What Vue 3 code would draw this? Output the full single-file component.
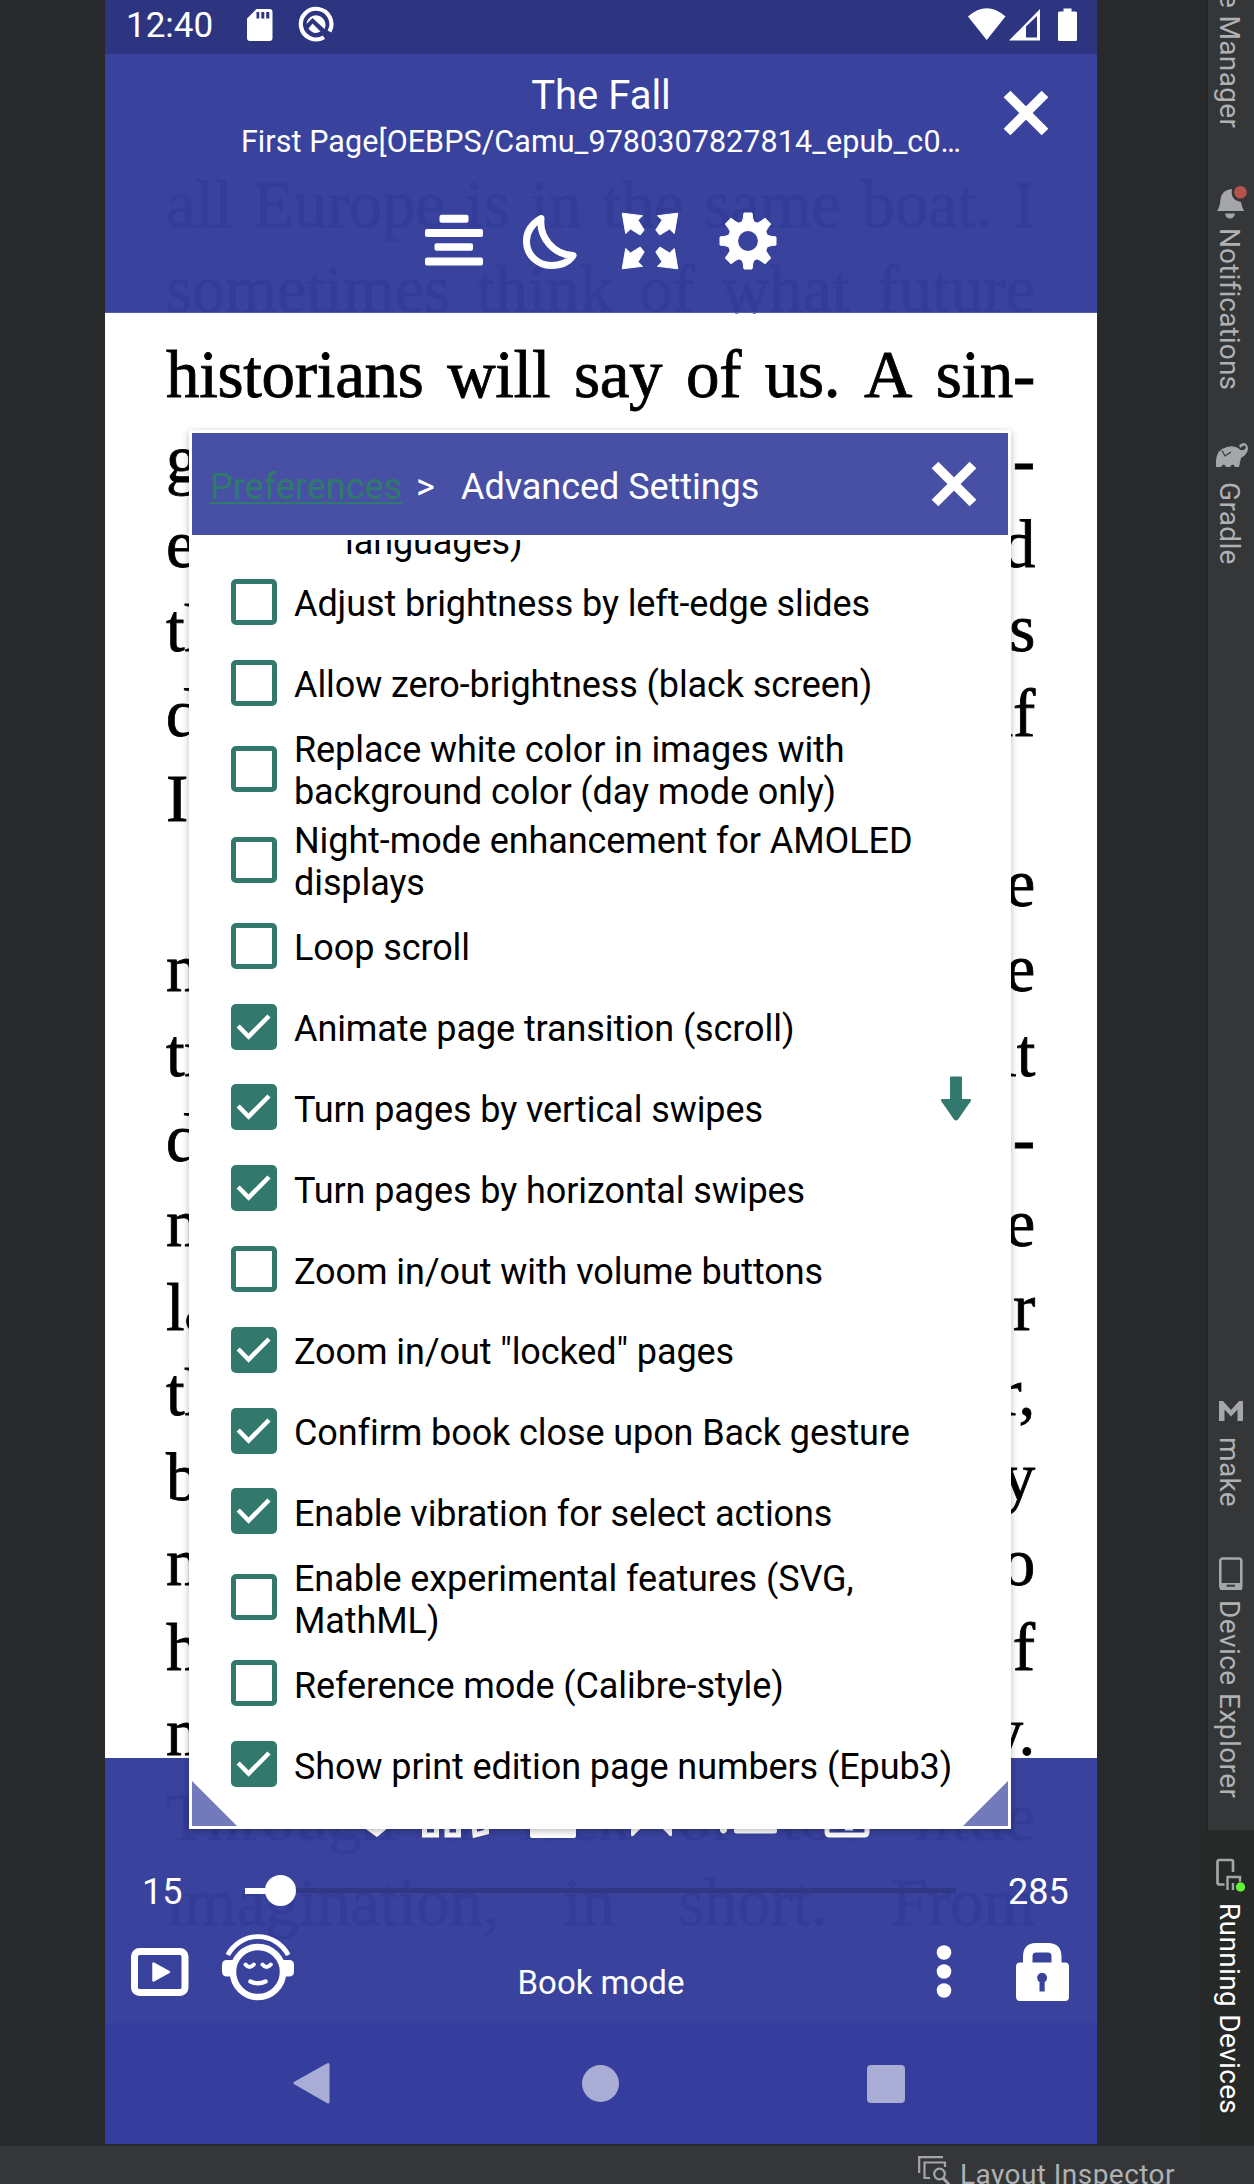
<script setup>
const lines = [
  ['all', 'Europe', 'is', 'in', 'the', 'same', 'boat.', 'I'],
  ['sometimes', 'think', 'of', 'what', 'future'],
  ['historians', 'will', 'say', 'of', 'us.', 'A', 'sin-'],
  ['g', 'l-'],
  ['e', 'd'],
  ['th', 's'],
  ['d', 'if'],
  ['I'],
  ['', 'e'],
  ['n', 'e'],
  ['tr', 'it'],
  ['d', 'e-'],
  ['n', 'e'],
  ['la', 'r'],
  ['th', 'r,'],
  ['b', 'y'],
  ['n', 'o'],
  ['h', 'of'],
  ['n', 'y.'],
  ['Through', 'a', 'lack', 'or', 'too', 'little'],
  ['imagination,', 'in', 'short.', 'From'],
]
const loose = ['l-', 'e-', 'of']
const options = [
  { t: 'Adjust brightness by left-edge slides', on: false },
  { t: 'Allow zero-brightness (black screen)', on: false },
  { t: 'Replace white color in images with\nbackground color (day mode only)', on: false },
  { t: 'Night-mode enhancement for AMOLED\ndisplays', on: false },
  { t: 'Loop scroll', on: false },
  { t: 'Animate page transition (scroll)', on: true },
  { t: 'Turn pages by vertical swipes', on: true },
  { t: 'Turn pages by horizontal swipes', on: true },
  { t: 'Zoom in/out with volume buttons', on: false },
  { t: 'Zoom in/out "locked" pages', on: true },
  { t: 'Confirm book close upon Back gesture', on: true },
  { t: 'Enable vibration for select actions', on: true },
  { t: 'Enable experimental features (SVG,\nMathML)', on: false },
  { t: 'Reference mode (Calibre-style)', on: false },
  { t: 'Show print edition page numbers (Epub3)', on: true },
]
const teeth = [0, 45, 90, 135, 180, 225, 270, 315]
const corners = ['1,1', '-1,1', '1,-1', '-1,-1']
</script>

<template>
  <div class="ide">
    <div class="workspace">
      <div class="phone">
        <div class="page">
          <div v-for="(l, i) in lines" :key="i" class="line"><span v-for="(w, j) in l" :key="j" :class="{ loose: l.length === 2 && loose.includes(w) }">{{ w }}</span></div>
        </div>

        <header class="top">
          <div class="status">
            <span class="clock">12:40</span>
            <svg class="sd" width="26" height="33" viewBox="0 0 26 33"><path fill="#fff" fill-rule="evenodd" d="M9.500 0H22.500Q25.500 0 25.500 3V29Q25.500 32 22.500 32H3Q0 32 0 29V9.500ZM9.500 3V9.500H12.300V3ZM14.300 3V9.500H17.300V3ZM19.200 3V9.500H22.300V3Z"/></svg>
            <svg class="q" width="36" height="36" viewBox="0 0 36 36"><path d="M26 31.200A15.300 15.300 0 1 1 31.500 25.500" fill="none" stroke="#fff" stroke-width="4.200"/><path fill="#fff" d="M8.500 18A9.500 9.500 0 1 1 26.500 23L14.500 12ZM14.500 17.500L22.500 25.500Q15.500 29.500 10.500 22.500Z"/></svg>
            <span class="grow"></span>
            <svg width="111" height="34" viewBox="0 0 111 34"><path fill="#fff" d="M0 8.500Q18.700 -8 37.500 8.500L18.700 32ZM41 32.500L72 1V32.500ZM90 5Q90 3.500 91.500 3.500H95.500V.5H103.500V3.500H107.500Q109 3.500 109 5V31.500Q109 33 107.500 33H91.500Q90 33 90 31.500Z"/><path fill="#2d3581" d="M58 18.500L69 8V29.500H58Z"/></svg>
          </div>
          <div class="titles">
            <div class="names"><h1>The Fall</h1><p>First Page[OEBPS/Camu_9780307827814_epub_c0…</p></div>
            <svg class="close" width="46" height="46" viewBox="0 0 46 46"><path d="M4 4L42 42M42 4L4 42" stroke="#fff" stroke-width="9.500"/></svg>
          </div>
          <div class="tools">
            <svg width="58" height="58" viewBox="-29 -29 58 58"><g fill="#fff"><rect x="-14.500" y="-26.300" width="29" height="8" rx="2"/><rect x="-29" y="-12" width="58" height="8" rx="2"/><rect x="-19.500" y="2.300" width="38.500" height="7.500" rx="2"/><rect x="-29" y="16.500" width="58" height="8" rx="2"/></g></svg>
            <svg width="58" height="58" viewBox="-29 -29 58 58"><path d="M-11 -22.500C-20 -17 -26 -9 -25.500 1A25 24 0 0 0 -1 24.500C9 24.500 17 20.500 21 14.500C2 13.500 -13 -3 -11 -22.500Z" fill="none" stroke="#fff" stroke-width="7" stroke-linejoin="round"/></svg>
            <svg width="58" height="58" viewBox="-29 -29 58 58"><path v-for="c in corners" :key="c" :transform="`scale(${c})`" fill="#fff" stroke="#fff" stroke-linejoin="round" d="M-27.800 -27.800L-7.500 -25.300L-12 -20.800L-5.800 -11L-9.800 -6L-19.500 -12L-24.300 -7.500Z"/></svg>
            <svg width="58" height="58" viewBox="-29 -29 58 58"><circle r="15.200" fill="none" stroke="#fff" stroke-width="10.600"/><path v-for="a in teeth" :key="a" :transform="`rotate(${a})`" fill="#fff" stroke="#fff" stroke-linejoin="round" d="M-6.300 -18Q-4.500 -22 -4 -28H4Q4.500 -22 6.300 -18Z"/></svg>
          </div>
        </header>

        <footer class="bottom">
          <svg class="tips" width="992" height="80" viewBox="105 1758 992 80"><g fill="#fff"><path d="M350 1818H400L377 1837ZM530 1818H576V1836Q576 1838 574 1838H532Q530 1838 530 1836ZM631 1818H672V1835Q671 1838 668 1834L651.500 1818L635 1834Q632 1838 631 1835ZM720 1818H727V1831Q723 1836 720 1831ZM734 1818H777V1831Q777 1833.500 774 1833.500H737Q734 1833.500 734 1831Z"/></g><g fill="none" stroke="#fff" stroke-width="5"><path d="M424.500 1818V1835H436.500V1818M447 1818V1835H458.500V1818M473 1818L475 1835L486.500 1832V1818M827 1818V1832Q827 1835 830 1835H864Q867 1835 867 1832V1818"/><path d="M845 1829H853" stroke-width="3"/></g></svg>
          <div class="seek">
            <span class="from">15</span>
            <div class="track"><i></i><b></b></div>
            <span class="to">285</span>
          </div>
          <div class="actions">
            <svg class="play" width="58" height="48" viewBox="0 0 58 48"><rect x="3.500" y="3.500" width="50.500" height="41" rx="5" fill="none" stroke="#fff" stroke-width="7"/><path d="M22.500 15.500L38 24L22.500 32.500Z" fill="#fff" stroke="#fff" stroke-width="2.500" stroke-linejoin="round"/></svg>
            <svg class="face" width="72" height="68" viewBox="0 0 72 68"><g fill="none" stroke="#fff"><circle cx="36" cy="39" r="25" stroke-width="6.500"/><path d="M5.800 22A34 34 0 0 1 66.200 22" stroke-width="4.800"/><path d="M23.500 31.500Q27.500 36.500 31.800 31.500M40.500 31.500Q44.500 36.500 48.800 31.500" stroke-width="4" stroke-linecap="round"/><path d="M28.500 48.500Q36 52 43.500 48.500" stroke-width="4.500" stroke-linecap="round"/></g><path fill="#fff" d="M5 27H14L8 43.500H5Q0 43.500 0 38.500V32Q0 27 5 27ZM67 27H58L64 43.500H67Q72 43.500 72 38.500V32Q72 27 67 27Z"/></svg>
            <span class="mode">Book mode</span>
            <svg class="dots" width="16" height="54" viewBox="0 0 16 54"><g fill="#fff"><circle cx="8" cy="7.500" r="7.300"/><circle cx="8" cy="26.500" r="7.300"/><circle cx="8" cy="45.500" r="7.300"/></g></svg>
            <svg class="lock" width="53" height="58" viewBox="0 0 53 58"><path fill="#fff" fill-rule="evenodd" d="M7 19.500V14Q7 0 20 0H32Q45.500 0 45.500 14V19.500H49Q53 19.500 53 23.500V54Q53 58 49 58H4Q0 58 0 54V23.500Q0 19.500 4 19.500ZM16.500 19.500H35.500V13Q35.500 9.500 32 9.500H20Q16.500 9.500 16.500 13ZM23.500 39V48.500H28.700V39A5 5 0 1 0 23.500 39Z"/></svg>
          </div>
          <nav class="nav">
            <svg width="38" height="43" viewBox="0 0 38 43"><path d="M2 21L35 2.500V40Z" fill="#a9add6" stroke="#a9add6" stroke-width="3" stroke-linejoin="round"/></svg>
            <i class="home"></i>
            <i class="recent"></i>
          </nav>
        </footer>

        <section class="dialog">
          <div class="head">
            <a class="crumb">Preferences</a><span class="sep">&gt;</span><span class="cur">Advanced Settings</span>
            <svg class="x" width="46" height="46" viewBox="0 0 46 46"><path d="M4 4L42 42M42 4L4 42" stroke="#fff" stroke-width="9.500"/></svg>
          </div>
          <div class="list">
            <div class="cut">languages)</div>
            <div v-for="o in options" :key="o.t" class="opt" :class="{ two: o.t.includes('\n') }">
              <span class="box" :class="{ on: o.on }"><svg v-if="o.on" width="46" height="46" viewBox="0 0 46 46"><path d="M7.200 22L17.600 32.500L38 12" fill="none" stroke="#fff" stroke-width="4.500"/></svg></span>
              <span class="lbl">{{ o.t }}</span>
            </div>
          </div>
          <svg class="down" width="32" height="46" viewBox="0 0 32 46"><path fill="#33786d" d="M10 1.500Q10 .5 11 .5H21Q22 .5 22 1.500V23H29.500Q32 23 30.500 25.500L18 43.500Q16 45.500 14 43.500L1.500 25.500Q0 23 2.500 23H10Z"/></svg>
          <i class="grip l"></i><i class="grip r"></i>
        </section>
      </div>

      <aside class="side">
        <div class="tab t0"><span>e Manager</span></div>
        <div class="tab t1">
          <svg width="32" height="34" viewBox="0 0 32 34"><path fill="#a4a6a8" d="M1 25Q4 21 4.500 13Q5.500 4 16 3Q14 14 25 16Q26 22 28 25ZM9 27.500H19Q18 32.500 14 32.500T9 27.500Z"/><circle cx="24.500" cy="6.300" r="6.300" fill="#b5524d"/></svg>
          <span>Notifications</span>
        </div>
        <div class="tab t2">
          <svg width="34" height="25" viewBox="0 0 34 25"><path fill="#a4a6a8" d="M1 24Q0 10 7 6Q16 1 23 5Q27 9 30 6Q32 3 29 2.500Q26.500 3 25.500 5L24 2.500Q26 0 29 0Q33 1 33 6Q32 12 26 15Q25 19 24 24H20Q18 19 15 24H11Q9 19 6 24Z"/><path d="M7 7.500L10 13L16 9" fill="none" stroke="#353638" stroke-width="1.200"/></svg>
          <span>Gradle</span>
        </div>
        <div class="tab t3">
          <svg width="24" height="20" viewBox="0 0 24 20"><path fill="#a4a6a8" d="M0 20V0H4L12 9L20 0H24V20H18.500V8.500L12 15.500L5.500 8.500V20Z"/></svg>
          <span>make</span>
        </div>
        <div class="tab t4">
          <svg width="24" height="33" viewBox="0 0 24 33"><rect x="1.300" y="1.500" width="21" height="30" rx="2.500" fill="none" stroke="#a4a6a8" stroke-width="2.600"/><path fill="#a4a6a8" d="M1 26H23V33H1Z"/><path d="M7.500 28.700H16" stroke="#353638" stroke-width="2"/></svg>
          <span>Device Explorer</span>
        </div>
        <div class="tab t5">
          <svg width="32" height="36" viewBox="0 0 32 36"><path d="M8.500 26.500H3.500Q1.500 26.500 1.500 24.500V4Q1.500 2 3.500 2H15.500Q17 2 17 4V14" fill="none" stroke="#a4a6a8" stroke-width="2.700"/><path d="M11.500 32V19H24V30M17 32V25" fill="none" stroke="#a4a6a8" stroke-width="2.400"/><circle cx="24.500" cy="29" r="5.500" fill="#1d2a1b"/><circle cx="24.500" cy="29" r="4.700" fill="#62f43a"/></svg>
          <span>Running Devices</span>
        </div>
      </aside>
    </div>
    <div class="statusbar">
      <svg width="32" height="29" viewBox="0 0 32 29"><g fill="none" stroke="#a4a6a8" stroke-width="2.200"><path d="M1.200 17V1.200H25M12 22H6.500V6.500H27V11"/><circle cx="21.500" cy="18" r="5.300"/><path d="M25 22L31 28.500" stroke-width="3"/></g></svg>
      <span>Layout Inspector</span>
    </div>
  </div>
</template>

<style>
body { margin: 0; background: #353638; }
</style>

<style scoped>
.ide { width: 1254px; height: 2184px; overflow: hidden; display: flex; flex-direction: column; background: #28292b; font-family: Roboto, sans-serif; }
.ide svg { display: block; flex: none; }
.workspace { height: 2146px; display: flex; }
.phone { position: relative; width: 992px; height: 2144px; margin-left: 105px; background: #fff; overflow: hidden; flex: none; }
.page { padding: 162px 62px 0 61px; font-family: "Liberation Serif", serif; font-size: 67px; letter-spacing: -.3px; color: #000; -webkit-text-stroke: .8px #000; }
.line { height: 84.88px; line-height: 84.88px; display: flex; justify-content: space-between; white-space: nowrap; }
.loose { letter-spacing: 5px; margin-right: -5px; }

.top { position: absolute; left: 0; top: 0; width: 992px; height: 312px; background: rgba(52, 61, 155, .975); border-bottom: 1px solid #555db0; color: #fff; }
.status { height: 54px; background: #2d3581; display: flex; align-items: flex-start; padding: 0 18px 0 21px; }
.clock { font-size: 35px; line-height: 41px; margin-top: 5px; width: 121px; }
.sd { margin-top: 9px; }
.q { margin: 6px 0 0 25px; }
.grow { flex: 1; }
.status > svg:last-child { margin-top: 8px; }
.titles { height: 158px; display: flex; }
.names { margin-left: 97px; width: 798px; text-align: center; }
.names h1 { margin: 18px 0 0; font-size: 40px; line-height: 47px; font-weight: 400; }
.names p { margin: 5px 0 0; font-size: 30.500px; line-height: 36px; letter-spacing: .07px; white-space: nowrap; }
.close { margin: 36px 0 0 3px; }
.tools { display: flex; gap: 40.300px; margin-left: 319.500px; }

.bottom { position: absolute; left: 0; top: 1758px; width: 992px; height: 386px; background: rgba(52, 61, 155, .975); color: #fff; }
.tips { height: 80px; }
.seek { display: flex; height: 105px; align-items: flex-start; font-size: 36px; line-height: 42px; }
.seek span { margin-top: 33px; }
.from { width: 140px; padding-left: 37px; box-sizing: border-box; }
.track { width: 711px; height: 5px; margin-top: 50px; background: #303886; display: flex; align-items: center; }
.track i { width: 21px; height: 6px; background: #fff; }
.track b { width: 31px; height: 31px; border-radius: 50%; background: #fff; flex: none; margin-left: -1px; }
.to { margin-left: 52px; }
.actions { height: 80px; display: flex; align-items: flex-start; }
.play { margin: 5px 0 0 26px; }
.face { margin: -10px 0 0 33px; }
.mode { font-size: 33px; line-height: 38px; margin-top: 21px; width: 170px; margin-left: 222px; text-align: center; white-space: nowrap; }
.dots { margin: 2px 0 0 250px; }
.lock { margin: 0 0 0 64px; }
.nav { height: 121px; background: #353d9d; display: flex; align-items: center; }
.nav svg { margin-left: 188px; }
.home { width: 37px; height: 37px; border-radius: 50%; background: #a9add6; margin-left: 251px; }
.recent { width: 38px; height: 38px; border-radius: 4px; background: #a9add6; margin-left: 248px; }

.dialog { position: absolute; left: 84px; top: 430px; width: 816px; height: 1393px; border: 3px solid #fff; background: #fff; box-shadow: 0 2px 7px rgba(0, 0, 0, .28); }
.head { height: 102px; background: #4750a5; color: #fff; display: flex; align-items: flex-start; font-size: 36px; line-height: 42px; }
.crumb { margin: 33px 0 0 18px; width: 193px; color: #2f7a6a; text-decoration: underline; text-decoration-thickness: 2px; text-underline-offset: 3px; white-space: nowrap; }
.sep { margin: 33px 0 0 13px; font-size: 36px; width: 31px; }
.cur { margin: 33px 0 0 14px; width: 470px; letter-spacing: -.05px; }
.x { margin-top: 28px; }
.list { margin-top: 5px; height: 1284px; overflow: hidden; color: #000; font-size: 36px; line-height: 42px; letter-spacing: -.09px; }
.cut { margin: -19px 0 0 153px; height: 40.500px; white-space: nowrap; }
.opt { height: 80.800px; display: flex; align-items: center; padding-left: 39px; }
.opt.two { height: 91.200px; }
.box { box-sizing: border-box; width: 46px; height: 46px; border: 5px solid #33786d; border-radius: 5px; flex: none; }
.box.on { background: #33786d; border: 0; }
.lbl { margin-left: 17px; padding-top: 5px; white-space: pre; }
.down { position: absolute; left: 748px; top: 643px; }
.grip { position: absolute; bottom: 0; width: 45px; height: 45px; background: #737abb; }
.grip.l { left: 0; clip-path: polygon(0 0, 100% 100%, 0 100%); }
.grip.r { right: 0; clip-path: polygon(100% 0, 100% 100%, 0 100%); }

.side { margin-left: 109px; width: 48px; height: 2144px; display: flex; flex-direction: column; color: #afb1b3; background: linear-gradient(90deg, #242527 2px, #353638 2px); }
.tab { display: flex; flex-direction: column; align-items: center; padding-right: 2px; font-size: 28px; letter-spacing: .35px; box-sizing: border-box; flex: none; }
.tab span { writing-mode: vertical-rl; line-height: 32px; white-space: nowrap; }
.t0 { height: 128px; justify-content: flex-end; }
.t1 { margin-top: 58px; height: 204px; gap: 8px; letter-spacing: .15px; }
.t2 { margin-top: 53px; height: 125px; gap: 14px; }
.t3 { margin-top: 833px; height: 106px; gap: 16px; }
.t4 { margin-top: 50px; height: 242px; gap: 10px; letter-spacing: .45px; }
.t5 { margin-top: 31px; height: 314px; padding-top: 28px; gap: 9px; background: #272928; color: #fff; }
.t1 svg, .t2 svg, .t5 svg { margin-left: 6px; }
.t3 svg, .t4 svg { margin-left: 4px; }
.statusbar { height: 38px; background: #353638; display: flex; color: #afb1b3; font-size: 28px; line-height: 32px; letter-spacing: .45px; }
.statusbar svg { margin: 10px 0 0 918px; }
.statusbar span { margin: 13px 0 0 10px; white-space: nowrap; }
</style>
